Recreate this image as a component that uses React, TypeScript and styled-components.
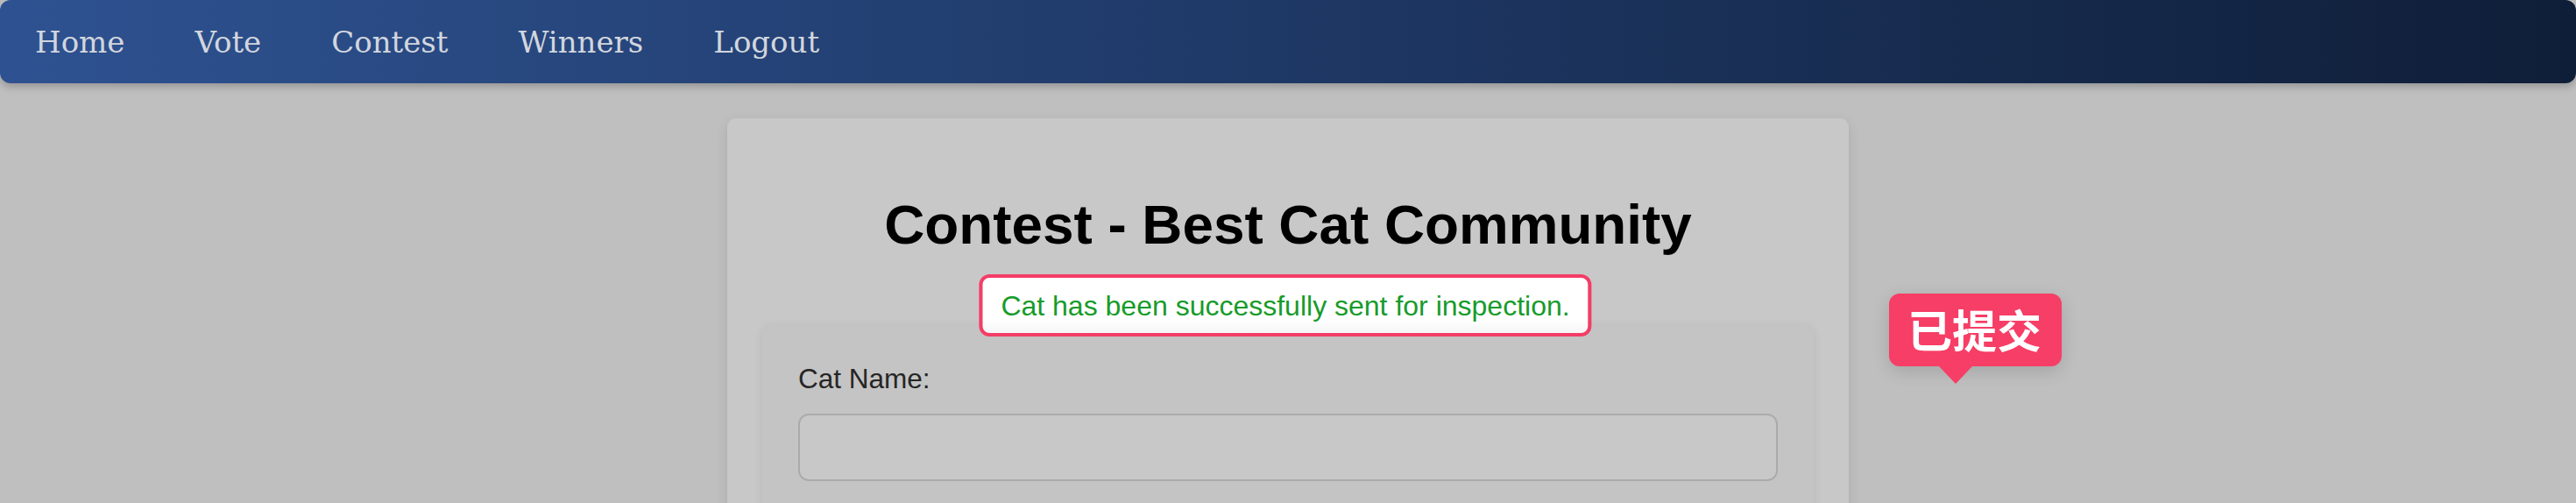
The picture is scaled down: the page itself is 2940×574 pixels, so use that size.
import styled, { createGlobalStyle } from "styled-components";

const GlobalStyle = createGlobalStyle`
  html, body {
    margin: 0;
    padding: 0;
    background: #bfbfbf;
    overflow: hidden;
  }
  * {
    box-sizing: border-box;
  }
`;

const Page = styled.div`
  position: relative;
  min-height: 574px;
  background: #bfbfbf;
`;

const NavBar = styled.nav`
  height: 95px;
  display: flex;
  align-items: center;
  border-radius: 12px;
  background: linear-gradient(90deg, #2e5291 0%, #203b6a 45%, #0f1e38 100%);
  box-shadow: 0 4px 10px rgba(0, 0, 0, 0.22);
`;

const NavLink = styled.a`
  padding: 0 40px;
  font-family: "DejaVu Serif", serif;
  font-size: 34px;
  color: #d2d6de;
  text-decoration: none;
  cursor: pointer;
`;

const Card = styled.section`
  position: relative;
  width: 1280px;
  margin: 40px auto 0;
  padding: 40px 40px;
  background: #c8c8c8;
  border-radius: 10px;
  box-shadow: 0 4px 14px rgba(0, 0, 0, 0.1);
`;

const Title = styled.h1`
  margin: 44px 0 78px;
  text-align: center;
  font-family: "Liberation Sans", Arial, sans-serif;
  font-size: 63.8px;
  font-weight: 700;
  color: #000;
`;

const Toast = styled.div`
  position: absolute;
  top: 178px;
  left: calc(50% - 3px);
  transform: translateX(-50%);
  z-index: 2;
  padding: 14px 21px 12px;
  border: 4px solid #f43d66;
  border-radius: 12px;
  background: linear-gradient(180deg, #ffffff 0%, #ffffff 75%, #f6f6f6 100%);
  font-family: "Liberation Sans", Arial, sans-serif;
  font-size: 32px;
  color: #179b2a;
  white-space: nowrap;
`;

const FormCard = styled.form`
  padding: 43px 41px 40px;
  background: #c4c4c4;
  border-radius: 10px;
  box-shadow: 0 2px 12px rgba(0, 0, 0, 0.08);
`;

const Label = styled.label`
  display: block;
  margin-bottom: 21px;
  font-family: "Liberation Sans", Arial, sans-serif;
  font-size: 31.5px;
  color: #262626;
`;

const Input = styled.input`
  display: block;
  width: 100%;
  height: 77px;
  margin-bottom: 20px;
  border: 2px solid #ababab;
  border-radius: 12px;
  background: #c8c8c8;
  font-size: 30px;
  outline: none;
`;

const Bubble = styled.div`
  position: absolute;
  left: 2156px;
  top: 335px;
  z-index: 3;
  padding: 14px 23px 16px 21px;
  border-radius: 12px;
  background: #f63e66;
  box-shadow: 0 6px 20px rgba(0, 0, 0, 0.14);
  font-family: "Noto Sans CJK SC", "Noto Sans", sans-serif;
  font-size: 51px;
  font-weight: 700;
  line-height: 53px;
  color: #fff;

  &::after {
    content: "";
    position: absolute;
    left: 57px;
    bottom: -20px;
    border-left: 19px solid transparent;
    border-right: 19px solid transparent;
    border-top: 20px solid #f63e66;
  }
`;

const links = ["Home", "Vote", "Contest", "Winners", "Logout"];

const App = () => {
  return (
    <>
      <GlobalStyle />
      <Page>
        <NavBar>
          {links.map((link) => (
            <NavLink key={link}>{link}</NavLink>
          ))}
        </NavBar>

        <Card>
          <Title>Contest - Best Cat Community</Title>
          <Toast>Cat has been successfully sent for inspection.</Toast>
          <FormCard>
            <Label>Cat Name:</Label>
            <Input type="text" />
            <Label>Cat Photo:</Label>
            <Input type="text" />
          </FormCard>
        </Card>

        <Bubble>已提交</Bubble>
      </Page>
    </>
  );
};

export default App;
